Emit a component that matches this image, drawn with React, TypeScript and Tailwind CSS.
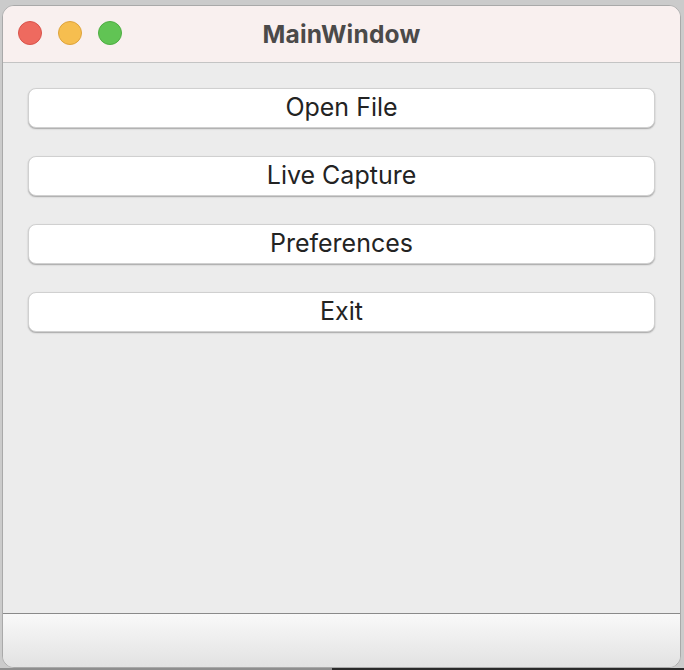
const buttons = ["Open File", "Live Capture", "Preferences", "Exit"];

export default function App() {
  return (
    <div className="w-[684px] h-[670px] bg-[#cbcbcb] flex flex-col overflow-hidden" style={{ fontFamily: "Inter, 'Noto Sans', sans-serif" }}>
      <div className="pt-[5px] pl-[2px] pr-[3px]">
        <div className="h-[663px] rounded-[12px] border border-[#a9a9a9] bg-[#ececec] overflow-hidden flex flex-col">
          <div className="relative h-[57px] shrink-0 bg-[#f9f0ef] border-b border-[#c4c4c4] flex items-center justify-center">
            <div className="absolute left-[15px] top-[15px] flex gap-[16px]">
              <span className="w-[24px] h-[24px] rounded-full bg-[#ee6a5f] border border-[#d9534b]" />
              <span className="w-[24px] h-[24px] rounded-full bg-[#f6be4f] border border-[#dea33c]" />
              <span className="w-[24px] h-[24px] rounded-full bg-[#61c454] border border-[#4ead42]" />
            </div>
            <span className="text-[24.5px] font-bold text-[#4b4a49] tracking-[0.2px]">MainWindow</span>
          </div>
          <div className="flex-1 flex flex-col gap-[28px] px-[25px] pt-[25px]">
            {buttons.map((b) => (
              <button
                key={b}
                type="button"
                className="h-[40px] rounded-[8px] bg-white text-[25px] text-[#232323] shadow-[0_1px_1.5px_rgba(0,0,0,0.3)] border-[0.5px] border-[#d0d0d0]"
              >
                {b}
              </button>
            ))}
          </div>
          <div className="h-[54px] shrink-0 border-t border-[#8a8a8a] bg-gradient-to-b from-[#f9f9f9] to-[#e2e2e2]" />
        </div>
      </div>
      <div className="flex h-[2px]">
        <div className="w-[332px] bg-[#8e8e8e]" />
        <div className="flex-1 bg-[#2a2a2a]" />
      </div>
    </div>
  );
}
